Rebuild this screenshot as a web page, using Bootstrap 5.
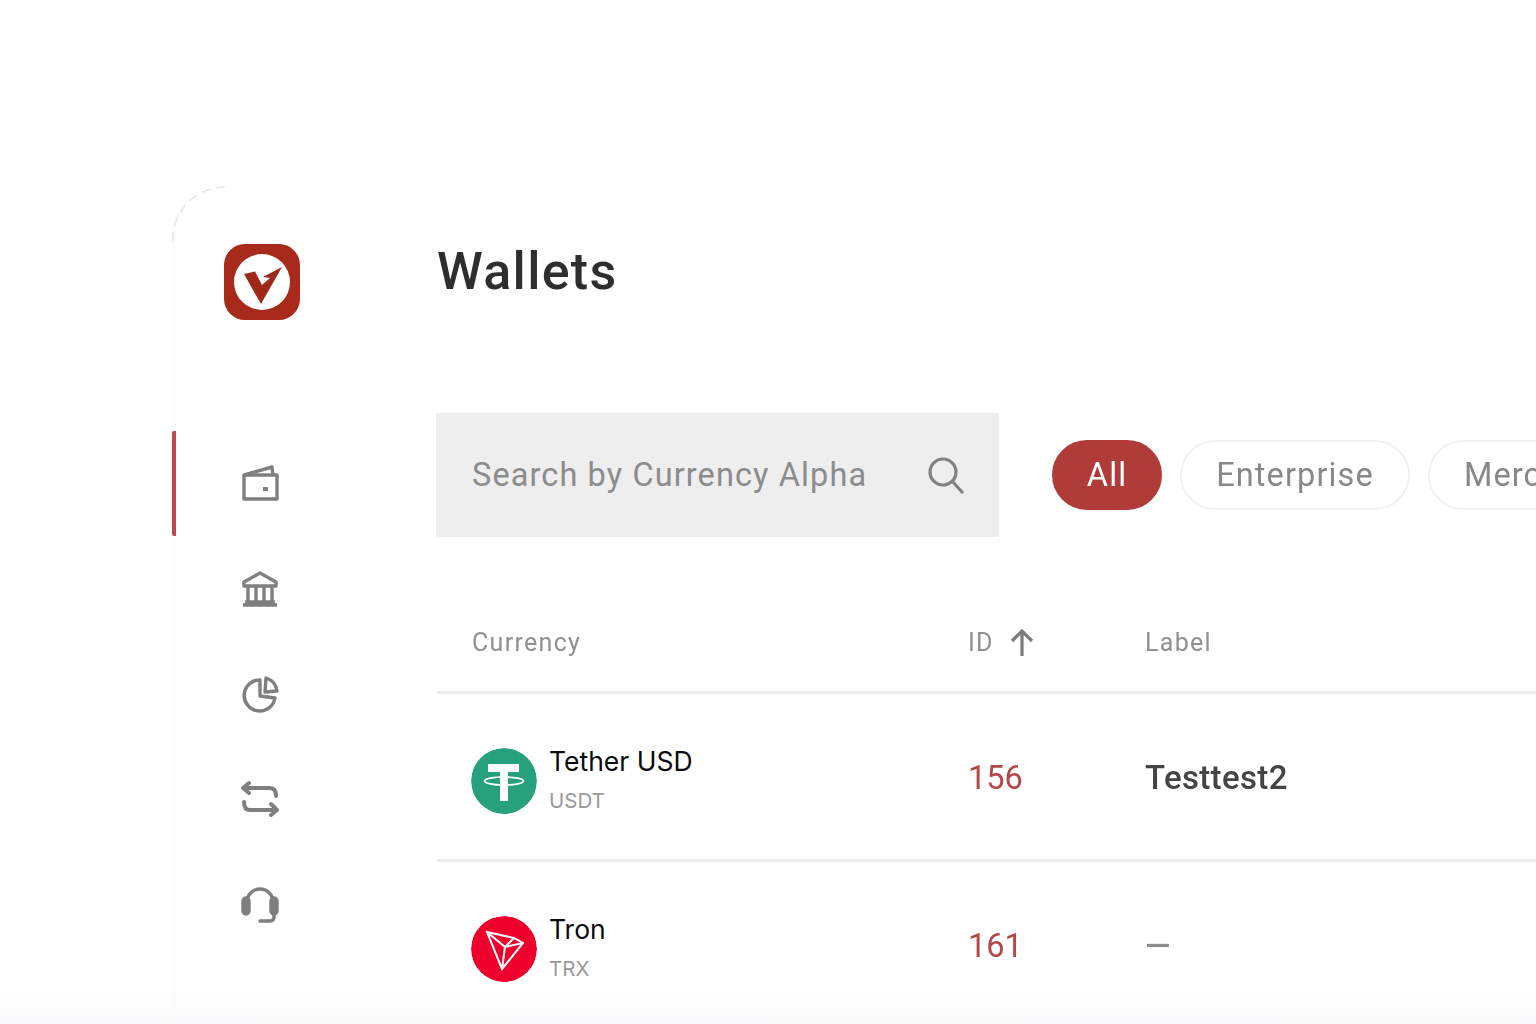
<!DOCTYPE html>
<html lang="en"><head><meta charset="utf-8"><title>Wallets</title>
<link href="https://cdn.jsdelivr.net/npm/bootstrap@5.3.0/dist/css/bootstrap.min.css" rel="stylesheet">
<style>
html,body{height:1024px;overflow:hidden;background:#fff}
body{font-family:Roboto,"Liberation Sans",sans-serif}
.stage{height:1024px;padding:185px 0 0 172px;width:1700px;background:linear-gradient(to bottom,#fff 985px,#fafafc 1024px)}
.side{width:265px;height:839px;border-left:4px solid #fbfbfc;border-top-left-radius:48px;padding-top:59px;flex:none;position:relative}
.arc{position:absolute;left:-4px;top:0}
.soft{filter:blur(.55px)}
.logo-wrap{padding-left:48px;height:187px}
.navi{height:105px;display:flex;align-items:center;padding-left:68px;margin-left:-4px}
.navi.on{border-left:4px solid #c0474a;border-radius:2px;padding-left:65px}
.navi svg{width:40px;height:40px;color:#7f7f7f}
.main-col{width:1263px;flex:none;padding-top:59px}
.ttl{font-size:52px;font-weight:500;color:#2e2e2e;line-height:56px;margin:0 0 113px;letter-spacing:1.3px}
.srch{width:563px;height:124px;background:#eee;padding:0 34px 0 36px;margin:0 53px 0 -1px;border-radius:2px}
.srch span{font-size:32.5px;color:#8c8c8c;letter-spacing:1.1px;white-space:nowrap}
.pill{height:70px;padding:0;font-size:32.5px;letter-spacing:1.1px;display:flex;align-items:center;justify-content:center;color:#888;border:2px solid #f1f1f1;background:#fff;margin-right:18px;flex:none}
.pill.act{background:#b03c3a;border-color:#b03c3a;color:#fff;width:110px}
.pill.p2{width:230px}.pill.p3{width:200px;justify-content:flex-start;padding-left:34px}
.hrow,.drow{display:flex;border-bottom:3px solid #ebebeb;padding-left:35px}
.hrow{height:121px;margin-top:36px;padding-top:22px;align-items:center;font-size:25px;color:#909090;letter-spacing:1.3px}
.drow{height:168px;align-items:center;padding-top:4px}
.c1{width:496px;flex:none}.drow .c1{padding-top:4px}.c2{width:177px;flex:none}
.coin{width:66px;height:66px;border-radius:50%;flex:none;margin-right:12px;margin-left:-1px}
.nm{font-family:Inter,sans-serif;font-size:26.5px;line-height:32px;color:#0b0b0b}
.sy{font-family:Inter,sans-serif;font-size:20.5px;line-height:32px;color:#999;margin-top:8px}
.idv{font-size:32.5px;color:#b4474a}
.lbl{font-size:33px;font-weight:500;color:#444;letter-spacing:.35px;margin-bottom:2px}
.lbl.dash{color:#8c8c8c}
</style></head><body>
<div class="stage d-flex">
<aside class="side">
<svg class="arc soft" width="60" height="60" viewBox="0 0 60 60" fill="none" stroke="#e6e6e6" stroke-width="1.5" stroke-dasharray="9 6"><path d="M1 56A52 52 0 0 1 53 2"/></svg>
<div class="logo-wrap">
<svg width="76" height="76" viewBox="0 0 76 76"><rect width="76" height="76" rx="21" fill="#a72a1b"/><circle cx="38" cy="38" r="28" fill="#fff"/><path d="M20 30L31 27.5L38 41L46 34L39 33L58 23L37 60Z" fill="#a0281a"/></svg>
</div>
<nav class="soft">
<div class="navi on"><svg viewBox="0 0 40 40" fill="none" stroke="currentColor" stroke-width="3.4" stroke-linejoin="round"><path d="M3 11H36V35H3Z"/><path d="M3 11L31 3L32 11"/><path d="M22 25h5" stroke-width="4"/></svg></div>
<div class="navi"><svg viewBox="0 0 40 40" fill="none" stroke="currentColor" stroke-width="3.4" stroke-linejoin="round"><path d="M20 4L36 13V17H4V13Z"/><path d="M8 17V33M16 17V33M24 17V33M32 17V33M3 36H37M5 33H35"/></svg></div>
<div class="navi"><svg viewBox="0 0 40 40" fill="none" stroke="currentColor" stroke-width="3.4" stroke-linejoin="round"><path d="M20 6A15.5 15.5 0 1 0 35 24L20 22Z"/><path d="M26 4A16 16 0 0 1 37 17L25 18Z"/></svg></div>
<div class="navi"><svg viewBox="0 0 40 40" fill="none" stroke="currentColor" stroke-width="4" stroke-linecap="round" stroke-linejoin="round"><path d="M9 4L3 9L9 14M3 9H30Q36 9 36 17"/><path d="M31 25L37 31L31 36M37 31H10Q4 31 4 23"/></svg></div>
<div class="navi"><svg viewBox="0 0 40 40" fill="none" stroke="currentColor" stroke-width="3.4" stroke-linecap="round"><path d="M7 18A13 13 0 0 1 33 18"/><rect x="3" y="14" width="6" height="16" rx="3" fill="currentColor"/><rect x="31" y="14" width="6" height="16" rx="3" fill="currentColor"/><path d="M34 30V33Q34 37 30 37H20"/></svg></div>
</nav>
</aside>
<main class="main-col">
<h1 class="ttl soft">Wallets</h1>
<div class="d-flex align-items-center soft">
<div class="srch d-flex align-items-center justify-content-between"><span>Search by Currency Alpha</span>
<svg width="38" height="38" viewBox="0 0 38 38" fill="none" stroke="#818181" stroke-width="3.2" stroke-linecap="round"><circle cx="16" cy="16" r="13"/><path d="M26 26L35 36"/></svg></div>
<button type="button" class="btn rounded-pill pill act">All</button><button type="button" class="btn rounded-pill pill p2">Enterprise</button><button type="button" class="btn rounded-pill pill p3">Merchant</button>
</div>
<div class="hrow"><div class="c1 soft">Currency</div><div class="c2 d-flex align-items-center gap-3 soft">ID
<svg width="24" height="28" viewBox="0 0 24 28" fill="none" stroke="#7c7c7c" stroke-width="3.2"><path d="M12 27V3M2 12L12 2L22 12"/></svg></div><div class="soft">Label</div></div>
<div class="drow"><div class="c1 d-flex align-items-center">
<svg class="coin" viewBox="0 0 66 66"><circle cx="33" cy="33" r="33" fill="#26a17b"/><path d="M17 16H48V24H37V53H29V24H17Z" fill="#fff"/><ellipse cx="33" cy="33" rx="19.5" ry="4" fill="none" stroke="#fff" stroke-width="1.7"/></svg>
<div><div class="nm">Tether USD</div><div class="sy">USDT</div></div></div>
<div class="c2 idv soft">156</div><div class="lbl soft">Testtest2</div></div>
<div class="drow"><div class="c1 d-flex align-items-center">
<svg class="coin" viewBox="0 0 66 66"><circle cx="33" cy="33" r="33" fill="#ef002c"/><path d="M16 16L43 22L52 27L31 53Z M16 16L34 31L31 53 M34 31L52 27 M34 31L43 22" fill="none" stroke="#fff" stroke-width="2" stroke-linejoin="miter"/></svg>
<div><div class="nm">Tron</div><div class="sy">TRX</div></div></div>
<div class="c2 idv soft">161</div><div class="lbl dash soft">—</div></div>
</main>
</div>
</body></html>
